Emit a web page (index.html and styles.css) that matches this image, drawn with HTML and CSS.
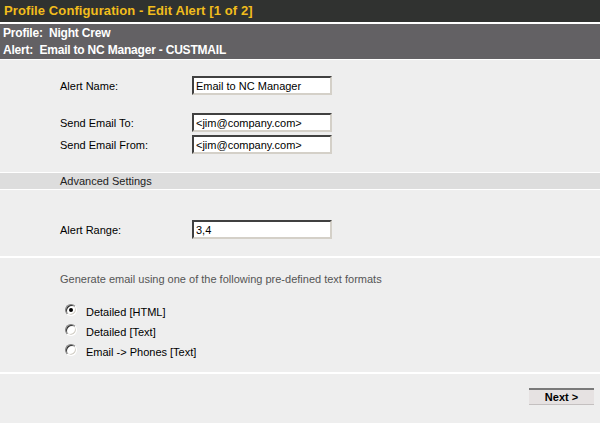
FILE: index.html
```html
<!DOCTYPE html>
<html>
<head>
<meta charset="utf-8">
<link rel="stylesheet" href="styles.css">
</head>
<body>
<div class="title">Profile Configuration - Edit Alert [1 of 2]</div>
<div class="subhead">
  <div class="subline">Profile:  Night Crew</div>
  <div class="subline">Alert:  Email to NC Manager - CUSTMAIL</div>
</div>
<div class="section s1">
  <div class="row"><span class="label">Alert Name:</span><input class="field" type="text" value="Email to NC Manager"></div>
  <div class="row r2"><span class="label">Send Email To:</span><input class="field" type="text" value="&lt;jim@company.com&gt;"></div>
  <div class="row r3"><span class="label">Send Email From:</span><input class="field" type="text" value="&lt;jim@company.com&gt;"></div>
</div>
<div class="bar">Advanced Settings</div>
<div class="section s2">
  <div class="row"><span class="label">Alert Range:</span><input class="field" type="text" value="3,4"></div>
</div>
<div class="section s3">
  <div class="note">Generate email using one of the following pre-defined text formats</div>
  <div class="options">
    <label class="opt"><input class="radio" type="radio" name="fmt" checked><span>Detailed [HTML]</span></label>
    <label class="opt"><input class="radio" type="radio" name="fmt"><span>Detailed [Text]</span></label>
    <label class="opt"><input class="radio" type="radio" name="fmt"><span>Email -&gt; Phones [Text]</span></label>
  </div>
</div>
<div class="footer">
  <button class="btn" type="button">Next &gt;</button>
</div>
</body>
</html>
```

FILE: styles.css
```css
html, body {
  margin: 0;
  padding: 0;
}
body {
  background: #eeeeee;
  font-family: "Liberation Sans", Arial, sans-serif;
  font-size: 11px;
  color: #000;
  width: 600px;
  height: 423px;
  overflow: hidden;
}
.title {
  height: 22px;
  line-height: 22px;
  background: #303230;
  color: #f2bd1c;
  font-weight: bold;
  font-size: 13px;
  letter-spacing: 0.1px;
  padding-left: 4px;
  border-bottom: 2px solid #ffffff;
}
.subhead {
  background: #636164;
  height: 34px;
  padding: 1px 0 0 3px;
  border-bottom: 1px solid #ffffff;
}
.subline {
  color: #ffffff;
  font-weight: bold;
  font-size: 12px;
  letter-spacing: -0.2px;
  line-height: 17px;
  white-space: pre;
}
.section {
  padding-left: 60px;
}
.s1 {
  padding-top: 16px;
  padding-bottom: 18px;
  border-bottom: 1px solid #ffffff;
}
.row {
  display: flex;
  align-items: center;
  height: 19px;
}
.r2 { margin-top: 18px; }
.r3 { margin-top: 3px; }
.label {
  width: 132px;
  flex: none;
}
.field {
  box-sizing: border-box;
  width: 140px;
  height: 19px;
  margin: 0;
  padding: 0 0 0 2px;
  font-family: "Liberation Sans", Arial, sans-serif;
  font-size: 11px;
  color: #000;
  background: #ffffff;
  border: 2px solid;
  border-color: #404040 #d4d0c8 #d4d0c8 #404040;
  outline: none;
}
.bar {
  background: #dddddd;
  height: 16px;
  line-height: 16px;
  padding-left: 60px;
  color: #222;
  border-bottom: 1px solid #ffffff;
}
.s2 {
  padding-top: 30px;
  padding-bottom: 17px;
  border-bottom: 2px solid #ffffff;
}
.s3 {
  padding-top: 14px;
  padding-bottom: 13px;
  border-bottom: 2px solid #ffffff;
}
.note {
  color: #555555;
  height: 14px;
  line-height: 14px;
}
.options {
  display: flex;
  flex-direction: column;
  margin-top: 19px;
  padding-left: 5px;
  gap: 6px;
}
.opt {
  display: flex;
  align-items: center;
  height: 14px;
}
.radio {
  appearance: none;
  -webkit-appearance: none;
  box-sizing: border-box;
  width: 12px;
  height: 12px;
  margin: -5px 9px 0 0;
  border-radius: 50%;
  border: 1px solid;
  border-color: #808080 #ffffff #ffffff #808080;
  box-shadow: inset 1px 1px 0 #303030, inset -1px -1px 0 #d4d0c8;
  background: #ffffff;
  position: relative;
  flex: none;
}
.radio:checked::after {
  content: "";
  position: absolute;
  left: 3px;
  top: 3px;
  width: 4px;
  height: 4px;
  border-radius: 50%;
  background: #000;
}
.footer {
  display: flex;
  justify-content: flex-end;
  padding: 14px 6px 0 0;
}
.btn {
  box-sizing: border-box;
  width: 65px;
  height: 17px;
  margin: 0;
  padding: 0;
  background: #e6e2e2;
  border: none;
  border-top: 2px solid #7a7a7a;
  border-bottom: 1px solid #c4c0c0;
  font-family: "Liberation Sans", Arial, sans-serif;
  font-weight: bold;
  font-size: 11px;
  color: #000;
}
```
